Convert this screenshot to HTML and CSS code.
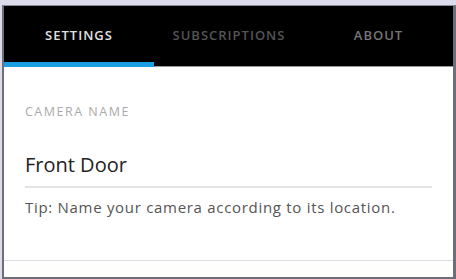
FILE: index.html
```html
<!DOCTYPE html>
<html lang="en">
  <head>
    <meta charset="UTF-8" />
    <meta name="viewport" content="width=device-width, initial-scale=1.0" />
    <title>Camera Settings</title>
    <link rel="stylesheet" href="styles.css">
  </head>
  <body>
    <div class="frame">
      <div class="tabs">
        <div class="tab tab-active">SETTINGS</div>
        <div class="tab">SUBSCRIPTIONS</div>
        <div class="tab">ABOUT</div>
      </div>
      <div class="panel">
        <div class="field-label">CAMERA NAME</div>
        <div class="field-value">Front Door</div>
        <div class="field-tip">Tip: Name your camera according to its location.</div>
      </div>
      <div class="footer"></div>
    </div>
  </body>
</html>
```
FILE: styles.css
```css
body {
  margin: 0;
  background-color: #dcdcec;
  font-family: "Open Sans", "Lato", sans-serif;
}
.frame {
  margin: 5px 0 0 2px;
  height: 271px;
  border-left: 2px solid #6e6e78;
  border-right: 3px solid #6e6e78;
  border-top: 1px solid #8a8a96;
  border-bottom: 3px solid #6e6e78;
  background-color: #fff;
  display: flex;
  flex-direction: column;
}
.tabs {
  display: flex;
  height: 60px;
  background-color: #000;
  border-bottom: 1px solid #999;
}
.tab {
  width: 150px;
  display: flex;
  align-items: center;
  justify-content: center;
  padding-bottom: 3px;
  font-size: 13px;
  font-weight: 600;
  letter-spacing: 1px;
  color: #555;
  box-sizing: border-box;
}
.tab:nth-child(3) {
  flex: 1;
  color: #777;
}
.tab-active {
  color: #e0e0e0;
  border-bottom: 5px solid #1a9ee3;
  margin-bottom: -1px;
  padding-top: 1px;
  padding-bottom: 0;
}
.panel {
  flex: 1;
  padding: 0 21px;
  border-bottom: 1px solid #ddd;
}
.field-label {
  margin-top: 38px;
  line-height: 14px;
  font-size: 12.5px;
  letter-spacing: 1.5px;
  color: #aaa;
}
.field-value {
  margin-top: 32px;
  padding-bottom: 7px;
  line-height: 28px;
  border-bottom: 2px solid #e4e4e4;
  font-size: 20px;
  color: #222;
}
.field-tip {
  margin-top: 9px;
  line-height: 20px;
  font-size: 15px;
  letter-spacing: 0.7px;
  color: #555;
}
.footer {
  height: 16px;
  background-color: #fefefc;
}
```
